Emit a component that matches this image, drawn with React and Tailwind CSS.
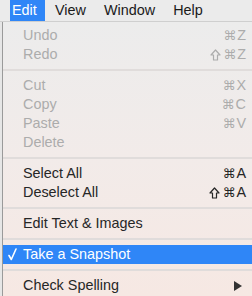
import React from "react";

const Sep = () => (
  <div className="h-[12px] flex items-center">
    <div className="h-[2px] w-full bg-[#e0dcdb]" />
  </div>
);

const Shift = ({ color }) => (
  <svg width="11" height="12" viewBox="0 0 11 12" className="mr-[2px]">
    <path d="M5.5 1 L10 6 L7.5 6 L7.5 11 L3.5 11 L3.5 6 L1 6 Z" fill="none" stroke={color} strokeWidth="1.2" strokeLinejoin="round" />
  </svg>
);

const Item = ({ label, shift, k, disabled, checked, active, arrow }) => {
  const col = active ? "#ffffff" : disabled ? "#acacac" : "#262626";
  return (
    <div
      className={
        "h-[19px] flex items-center pl-[20px] pr-[6px] relative " +
        (active ? "bg-[#2f86f7] text-white" : disabled ? "text-[#acacac]" : "text-[#262626]")
      }
    >
      {checked && (
        <svg width="9" height="13" viewBox="0 0 9 13" className="absolute left-[5px] top-[3px]">
          <path d="M1 7.5 L3.3 11.5 L8 1" fill="none" stroke="#fff" strokeWidth="1.6" strokeLinecap="round" strokeLinejoin="round" />
        </svg>
      )}
      <span className="flex-1 text-[14.4px] leading-[19px]">{label}</span>
      {k && (
        <span className="flex items-center">
          {shift && <Shift color={col} />}
          <span className="text-[13px] leading-[19px] font-['DejaVu_Sans',sans-serif] mr-[1px]">⌘</span>
          <span className="text-[14.4px] leading-[19px]">{k}</span>
        </span>
      )}
      {arrow && (
        <svg width="8" height="10" viewBox="0 0 8 10" className="mr-[4px]">
          <path d="M0 0 L8 5 L0 10 Z" fill="#333" />
        </svg>
      )}
    </div>
  );
};

export default function App() {
  return (
    <div className="w-[252px] h-[296px] overflow-hidden bg-[#ececec] font-['Liberation_Sans',Arial,sans-serif] flex flex-col">
      <div className="h-[22px] flex items-stretch bg-[#ebebeb] border-b border-[#cfcfcf] text-[14.4px] text-[#1a1a1a] shrink-0">
        <div className="ml-[10px] w-[35px] pl-[2px] bg-[#2f86f7] text-white flex items-center">Edit</div>
        <div className="flex items-center gap-[18px] ml-[10px]">
          <span>View</span>
          <span>Window</span>
          <span>Help</span>
        </div>
      </div>
      <div className="flex flex-1">
        <div className="w-[3px] bg-[#e6e6e6] border-r border-[#9a9a9a]" />
        <div className="flex-1 pt-[4px] bg-gradient-to-b from-[#ececec] via-[#f2ebe9] to-[#f6e8e3]">
          <Item label="Undo" k="Z" disabled />
          <Item label="Redo" k="Z" shift disabled />
          <Sep />
          <Item label="Cut" k="X" disabled />
          <Item label="Copy" k="C" disabled />
          <Item label="Paste" k="V" disabled />
          <Item label="Delete" disabled />
          <Sep />
          <Item label="Select All" k="A" />
          <Item label="Deselect All" k="A" shift />
          <Sep />
          <Item label="Edit Text & Images" />
          <Sep />
          <Item label="Take a Snapshot" checked active />
          <Sep />
          <Item label="Check Spelling" arrow />
        </div>
      </div>
    </div>
  );
}
